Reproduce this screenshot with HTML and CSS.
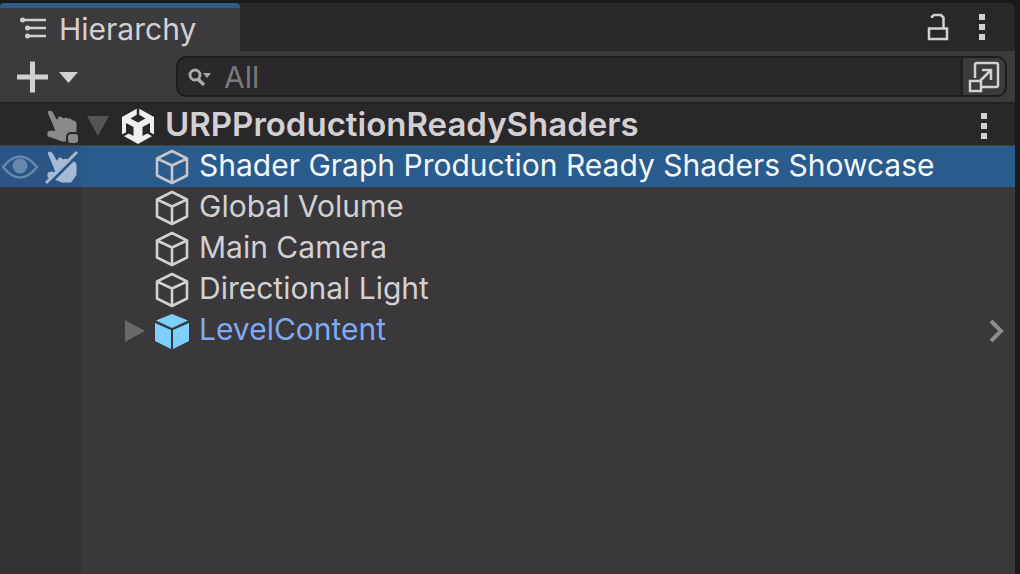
FILE: index.html
```html
<!DOCTYPE html>
<html lang="en">
  <head>
    <meta charset="utf-8">
    <meta name="viewport" content="width=device-width, initial-scale=1">
    <title>Hierarchy</title>
    <link rel="stylesheet" href="styles.css">
  </head>

  <body>
    <!-- shared icons -->
    <svg class="defs" aria-hidden="true">
      <symbol id="dots" viewBox="0 0 6 28">
        <path d="M0 1h6v6H0zM0 11h6v6H0zM0 21h6v6H0z" fill="currentColor"/>
      </symbol>
      <symbol id="cube" viewBox="0 0 36 36">
        <path d="M18 2 33 9.500V26.500L18 34 3 26.500V9.500ZM3 9.500 18 16.500 33 9.500M18 16.500V34" fill="none" stroke="currentColor" stroke-width="2.600" stroke-linejoin="round"/>
      </symbol>
      <symbol id="hand" viewBox="0 0 36 36">
        <path d="M5 4Q7 2 9 4L14 13 16 9Q18 8 20 11 23 9 25 11 28 10 29 13 32 12 33 15V26L28 33H19L14 31 5 28V24Q8 22 13 24L11 18Z" fill="currentColor" stroke="currentColor" stroke-linejoin="round"/>
      </symbol>
    </svg>

    <div class="panel">
      <header class="tab_bar">
        <button class="tab">
          <svg width="28" height="24" viewBox="0 0 28 24">
            <path d="M3 3H26M8 11H26M8 19H26" stroke="currentColor" stroke-width="2.500"/>
            <circle cx="2.500" cy="3" r="2.500" fill="currentColor"/>
            <circle cx="7.500" cy="11" r="2.500" fill="currentColor"/>
            <circle cx="7.500" cy="19" r="2.500" fill="currentColor"/>
          </svg>
          <span>Hierarchy</span>
        </button>
        <div class="tab_tools">
          <button aria-label="Lock">
            <svg width="22" height="28" viewBox="0 0 22 28">
              <path d="M2 15.500H20V26H2ZM5 5V3.500L7 2H14L16.500 4.500V15" fill="none" stroke="currentColor" stroke-width="2.500"/>
            </svg>
          </button>
          <button aria-label="Panel menu"><svg width="6" height="28"><use href="#dots"/></svg></button>
        </div>
      </header>

      <div class="toolbar">
        <button class="add" aria-label="Create">
          <svg width="62" height="32" viewBox="0 0 62 32">
            <path d="M0 16H31M15.500 0.500V31.500" stroke="currentColor" stroke-width="5"/>
            <path d="M42 11H61L51.500 22Z" fill="currentColor"/>
          </svg>
        </button>
        <div class="search">
          <svg width="26" height="20" viewBox="0 0 26 20">
            <circle cx="7" cy="8" r="5" fill="none" stroke="currentColor" stroke-width="3"/>
            <path d="M10 12 16 18" stroke="currentColor" stroke-width="3.500"/>
            <path d="M15 6H23L19 11Z" fill="currentColor"/>
          </svg>
          <input type="text" placeholder="All" aria-label="Search">
          <button class="expand" aria-label="Open in search window">
            <svg width="32" height="32" viewBox="0 0 32 32" fill="none" stroke="currentColor" stroke-width="2.500">
              <path d="M7 17V4Q7 2 9 2H28Q30 2 30 4V24Q30 26 28 26H14"/>
              <path d="M2 20H13V30H2ZM12 20 23 9M14 9H23V19"/>
            </svg>
          </button>
        </div>
      </div>

      <div class="tree">
        <div class="row scene">
          <div class="gutter">
            <svg class="scene_hand" width="36" height="36" viewBox="0 0 36 36">
              <use href="#hand" width="36" height="36"/>
              <rect x="24" y="25" width="12" height="11" rx="4" fill="currentColor" stroke="#29272a" stroke-width="2"/>
            </svg>
          </div>
          <button class="fold" aria-label="Collapse scene">
            <svg width="24" height="22" viewBox="0 0 24 22"><path d="M1 1H23L12 21Z" fill="currentColor"/></svg>
          </button>
          <svg class="logo" width="34" height="38" viewBox="0 0 34 38">
            <path d="M17 1 33 10V28L17 37 1 28V10Z" fill="#f0eff0"/>
            <path d="M9.500 11.500 17 7 24.500 11.500 17 15.500Z" fill="#29272a"/>
            <path d="M5 16 12.500 20V29L5 25ZM29 16 21.500 20V29L29 25Z" fill="#29272a"/>
            <path d="M17 0V9M0 29.500 8 25M34 29.500 26 25" stroke="#29272a" stroke-width="2.500"/>
          </svg>
          <span class="name">URPProductionReadyShaders</span>
          <button class="more" aria-label="Scene menu"><svg width="6" height="28"><use href="#dots"/></svg></button>
        </div>

        <div class="row selected">
          <div class="gutter">
            <svg class="eye" width="36" height="24" viewBox="0 0 36 24">
              <path d="M1 12Q18-9 35 12Q18 33 1 12Z" fill="none" stroke="currentColor" stroke-width="2.500"/>
              <circle cx="18" cy="11" r="7.500" fill="currentColor"/>
            </svg>
            <svg class="no_pick" width="36" height="36" viewBox="0 0 36 36">
              <use href="#hand" width="36" height="36"/>
              <path d="M5 36 36 5" stroke="#2b5584" stroke-width="3"/>
              <path d="M3 34 34 3" stroke="currentColor" stroke-width="3"/>
            </svg>
          </div>
          <svg class="icon" width="36" height="36"><use href="#cube"/></svg>
          <span class="name">Shader Graph Production Ready Shaders Showcase</span>
        </div>

        <div class="row">
          <div class="gutter"></div>
          <svg class="icon" width="36" height="36"><use href="#cube"/></svg>
          <span class="name">Global Volume</span>
        </div>

        <div class="row">
          <div class="gutter"></div>
          <svg class="icon" width="36" height="36"><use href="#cube"/></svg>
          <span class="name">Main Camera</span>
        </div>

        <div class="row">
          <div class="gutter"></div>
          <svg class="icon" width="36" height="36"><use href="#cube"/></svg>
          <span class="name">Directional Light</span>
        </div>

        <div class="row prefab">
          <div class="gutter"></div>
          <button class="fold" aria-label="Expand LevelContent">
            <svg width="20" height="24" viewBox="0 0 20 24"><path d="M0 1V23L20 12Z" fill="currentColor"/></svg>
          </button>
          <svg class="icon" width="36" height="36" viewBox="0 0 36 36">
            <path d="M18 1 34 7.500 18 15 2 7.500ZM1 10 17 17V36L1 28ZM35 10 19 17V36L35 28Z" fill="#7bd0fc"/>
          </svg>
          <span class="name">LevelContent</span>
          <button class="more" aria-label="Open prefab">
            <svg width="16" height="24" viewBox="0 0 16 24"><path d="M2 2 12 12 2 22" fill="none" stroke="currentColor" stroke-width="4"/></svg>
          </button>
        </div>
      </div>
    </div>
  </body>
</html>
```

FILE: styles.css
```css
* {
  box-sizing: border-box;
}

body {
  margin: 0;
  background-color: #1b1a1b;
  color: #d2d0d2;
  font-family: Inter, sans-serif;
  font-size: 30px;
}

svg {
  display: block;
  flex: none;
}

button {
  display: flex;
  align-items: center;
  padding: 0;
  border: none;
  background: none;
  color: inherit;
  font: inherit;
  cursor: pointer;
}

.defs {
  position: absolute;
  width: 0;
  height: 0;
}

.panel {
  display: flex;
  flex-direction: column;
  min-height: 100vh;
  padding-top: 3px;
  margin-right: 5px;
}

.tab_bar {
  display: flex;
  justify-content: space-between;
  height: 48px;
  background-color: #29272a;
  border-radius: 0 6px 0 0;
}

.tab {
  gap: 11px;
  padding: 0 44px 2px 20px;
  background-color: #3c3a3d;
  border-top: 5px solid #2c5d8b;
  border-radius: 4px 4px 0 0;
}

.tab_tools {
  display: flex;
  align-items: center;
  gap: 30px;
  padding-right: 30px;
}

.toolbar {
  display: flex;
  align-items: center;
  justify-content: space-between;
  gap: 97px;
  height: 53px;
  padding: 0 8px 0 17px;
  background-color: #3c3a3d;
  border-bottom: 2px solid #222123;
}

.search {
  display: flex;
  flex: 1;
  align-items: center;
  height: 41px;
  padding-left: 10px;
  overflow: hidden;
  background-color: #2a282b;
  border: 2px solid #1e1c1e;
  border-radius: 10px;
  color: #aaa8aa;
}

.search input {
  flex: 1;
  min-width: 0;
  padding: 0 0 0 10px;
  border: none;
  outline: none;
  background: none;
  color: #d2d0d2;
  font: inherit;
}

.search input::placeholder {
  color: #7b797b;
  opacity: 1;
}

.expand {
  align-self: stretch;
  padding: 0 5px;
  background-color: #3c3a3d;
  border-left: 3px solid #222022;
  color: #d2d0d2;
}

.tree {
  flex: 1;
  background: linear-gradient(to right, #333133 81px, #3a383b 81px);
}

.row {
  display: grid;
  grid-template-columns: 81px 73px 45px 1fr auto;
  grid-template-areas: "gutter fold icon name more";
  align-items: center;
  height: 41px;
  padding-right: 10px;
}

.gutter {
  grid-area: gutter;
  display: flex;
  align-items: center;
  justify-content: space-between;
  align-self: stretch;
  padding: 0 2px;
}

.fold {
  grid-area: fold;
  justify-self: end;
  padding-right: 9px;
  color: #6a686a;
}

.icon,
.logo {
  grid-area: icon;
}

.name {
  grid-area: name;
  padding-bottom: 3px;
  white-space: nowrap;
}

.more {
  grid-area: more;
  color: #8e8c8e;
}

/* the scene sits one level above its objects */
.scene {
  grid-template-columns: 81px 40px 44px 1fr auto;
  height: 42px;
  padding-right: 28px;
  background-color: #29272a;
  border-bottom: 1px solid #444142;
  font-size: 33px;
  font-weight: 600;
}

.scene .gutter {
  justify-content: flex-end;
  color: #8b898b;
}

.scene .fold {
  padding-right: 11px;
  color: #555355;
}

.scene .more {
  color: #d2d0d2;
}

.selected {
  background-color: #295b8d;
  color: #f4f7fb;
}

.selected .gutter {
  background-color: #2b5584;
}

.selected .icon {
  color: #c8c6c8;
}

.eye {
  color: #6688ad;
}

.no_pick {
  color: #a5bad4;
}

.prefab .name {
  color: #7eabf5;
}
```
